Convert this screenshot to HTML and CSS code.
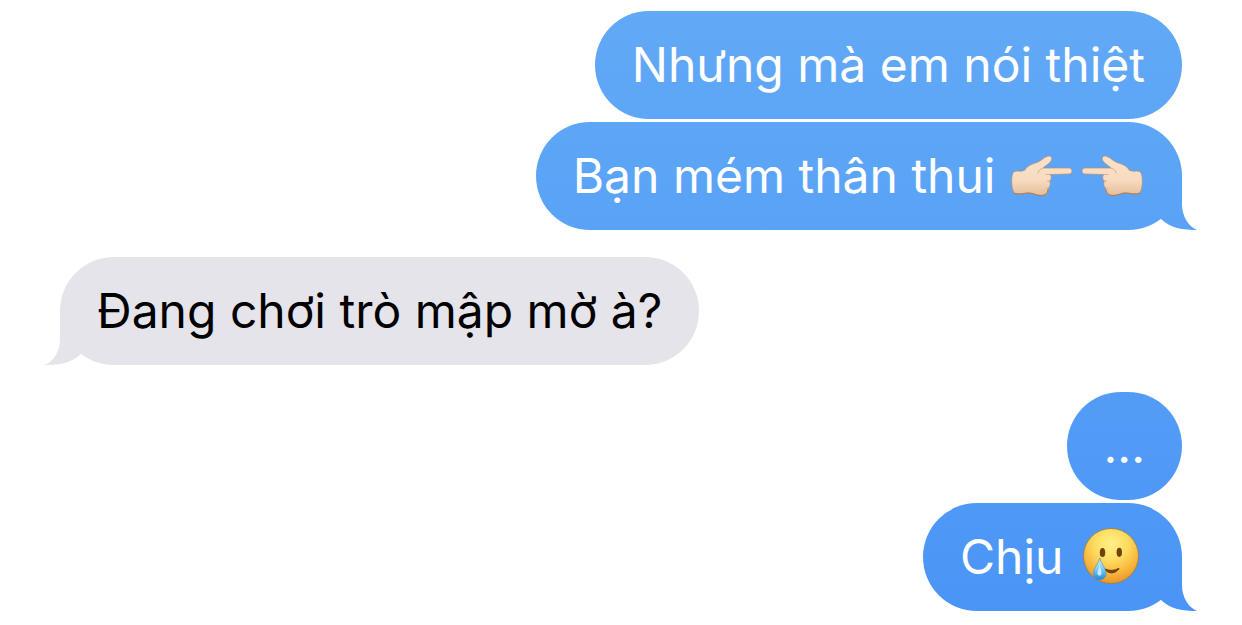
FILE: index.html
```
<!DOCTYPE html>
<html lang="vi">
<head>
    <meta charset="UTF-8">
    <meta name="viewport" content="width=device-width, initial-scale=1.0">
    <title>Tin nhắn</title>
    <link rel="stylesheet" href="styles.css">
</head>
<body>
    <!-- shared hand shape -->
    <svg class="defs" width="0" height="0" aria-hidden="true">
        <defs>
            <linearGradient id="skin" x1="0" y1="0" x2="0" y2="1">
                <stop offset="0" stop-color="#fae0c6"/>
                <stop offset="0.6" stop-color="#f7dcc2"/>
                <stop offset="1" stop-color="#e6bd9a"/>
            </linearGradient>
            <symbol id="hand" viewBox="0 0 68 68">
                <path d="M4 31Q5 29 8 29Q13 30 16 28C18 24 23 22 28 20.500C32 19 34 16 38 14.500C42 13 44 16 42 19C40 22 37 23 34 26H60C64 26 64 32 60 32L41 32.500C43 34 42.500 38 40.500 39C42 42 41 45 39 46.500C40 51 37 53.500 32 53.500C27 53.500 24 51 20 51C15 51 10 53 6 51.500C2 49 2 34 4 31Z" fill="url(#skin)" stroke="#b98d6b" stroke-width="0.700"/>
                <path d="M34 26C31 27 29 29 29 31M41 32.500L37 32.500" fill="none" stroke="#dcae8c" stroke-width="1" stroke-linecap="round"/>
                <path d="M40.500 39L38.500 39M39 46.500L37.500 46.500" fill="none" stroke="#dcae8c" stroke-width="1" stroke-linecap="round"/>
                <path d="M5 51.300C10 53 15 51 20 51C24 51 27 53.500 32 53.500C36 53.500 38.500 51.500 39 48" fill="none" stroke="#ae7d59" stroke-width="1" stroke-linecap="round"/>
            </symbol>
        </defs>
    </svg>

    <main class="chat">
        <div class="group sent">
            <p class="bubble">Nhưng mà em nói thiệt</p>
            <p class="bubble tail">Bạn mém thân thui
                <svg class="emoji" role="img" aria-label="Chỉ tay sang phải"><use href="#hand"/></svg><svg class="emoji flip" role="img" aria-label="Chỉ tay sang trái"><use href="#hand"/></svg></p>
        </div>

        <div class="group received">
            <p class="bubble tail">Đang chơi trò mập mờ à?</p>
        </div>

        <div class="group sent">
            <p class="bubble">...</p>
            <p class="bubble tail">Chịu
                <svg class="emoji" viewBox="0 0 68 68" role="img" aria-label="Mặt cười rơi lệ">
                    <defs>
                        <radialGradient id="face" cx="0.5" cy="0.28" r="0.75">
                            <stop offset="0" stop-color="#fff08a"/>
                            <stop offset="0.4" stop-color="#fddc60"/>
                            <stop offset="0.72" stop-color="#f7b63c"/>
                            <stop offset="1" stop-color="#e68f28"/>
                        </radialGradient>
                        <linearGradient id="tear" x1="0" y1="0" x2="0" y2="1">
                            <stop offset="0" stop-color="#d3f3fd"/>
                            <stop offset="0.5" stop-color="#7fcdf6"/>
                            <stop offset="1" stop-color="#2488d6"/>
                        </linearGradient>
                    </defs>
                    <circle cx="34" cy="33" r="27.500" fill="url(#face)" stroke="#a38040" stroke-width="0.900"/>
                    <ellipse cx="25.500" cy="29.500" rx="2.700" ry="4.600" fill="#70400f"/>
                    <ellipse cx="42.300" cy="29.300" rx="2.700" ry="4.600" fill="#70400f"/>
                    <path d="M28 47Q35 53.500 42 46Q42.500 45.500 41.500 45.500Q35 49 28 46Z" fill="#70400f" stroke="#70400f" stroke-linejoin="round"/>
                    <path d="M22.800 35C24 41 29 45 29 50.500C29 54.500 26 56.800 22.500 56.800C19 56.800 16.300 54.500 16.300 50.500C16.300 45 21.500 41 22.800 35Z" fill="url(#tear)" stroke="#3a8fc8" stroke-width="0.600"/>
                    <path d="M22.800 42C23 46 25 48 24.500 51C24 53 21 53 20.500 51C20 48 22.500 46 22.800 42Z" fill="#e4f8ff" opacity="0.800"/>
                </svg></p>
        </div>
    </main>
</body>
</html>
```
FILE: styles.css
```
* {
    margin: 0;
    padding: 0;
    box-sizing: border-box;
}

body {
    background: #fff;
    font-family: Inter, 'Noto Sans', sans-serif;
    font-size: 48px;
    line-height: 68px;
}

.defs {
    position: absolute;
}

.chat {
    display: flex;
    flex-direction: column;
    gap: 27px;
    padding: 11px 60px 14px;
}

.group {
    display: flex;
    flex-direction: column;
    align-items: flex-start;
    gap: 3px;
}

.sent {
    align-items: flex-end;
    color: #fff;
}

.received {
    color: #000;
}

/* bubbles */
.bubble {
    position: relative;
    min-width: 112px;
    padding: 20px 37px;
    border-radius: 54px;
    text-align: center;
}

/* one gradient runs down the window behind all sent bubbles */
.sent .bubble,
.sent .tail::after {
    background: linear-gradient(#62aaf6, #4a94f6) fixed;
}

.received .bubble,
.received .tail::after {
    background: #e5e4ea;
}

/* tail in the bottom corner */
.tail::after {
    content: '';
    position: absolute;
    right: -15px;
    bottom: 0;
    width: 60px;
    height: 54px;
    clip-path: path('M45 0V28C45 40 51 50 60 54C46 54 33 52 24 43L16 30V0Z');
}

.received .tail::after {
    right: auto;
    left: -15px;
    clip-path: path('M15 0V28C15 40 9 50 0 54C14 54 27 52 36 43L44 30V0Z');
}

/* emoji */
.emoji {
    display: inline-block;
    width: 68px;
    height: 68px;
    vertical-align: top;
}

.flip {
    transform: scaleX(-1);
}
```
